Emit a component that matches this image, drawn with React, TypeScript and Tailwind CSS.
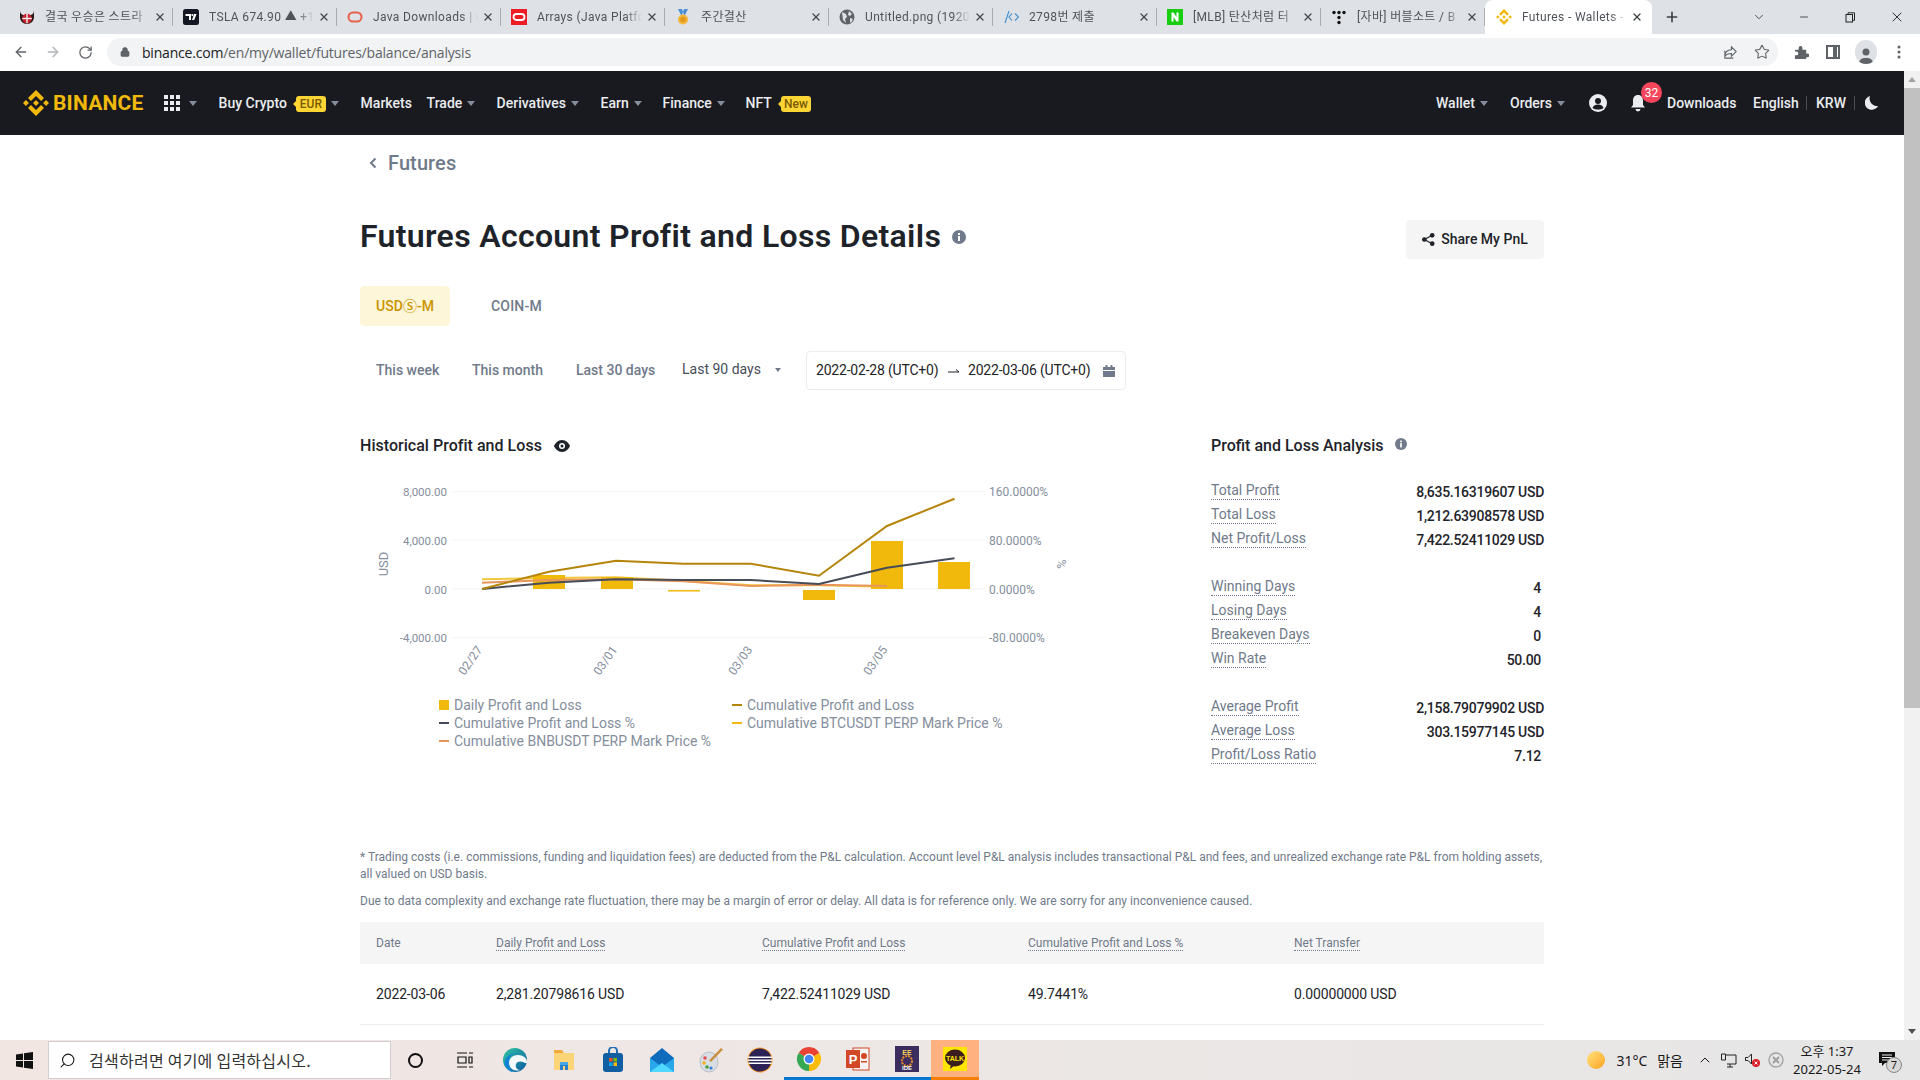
import React from "react";
import { ArrowLeft, ArrowRight, RotateCw, Lock, Star, Plus, ChevronDown, Minus, X, ChevronUp, Search } from "lucide-react";

const BN = "M38.73 53.2l24.59-24.58 24.6 24.6 14.3-14.31L63.32 0 24.42 38.9zM0 63.31l14.3-14.31 14.31 14.31-14.31 14.3zM38.73 73.41l24.59 24.59 24.6-24.6 14.31 14.29-38.9 38.91-38.91-38.88zM98 63.31l14.3-14.31 14.31 14.3-14.31 14.32zM77.83 63.3L63.32 48.78 52.59 59.51l-1.24 1.23-2.54 2.54 14.51 14.5 14.51-14.47z";

function BnLogo({ size }: { size: number }) {
  return (
    <svg width={size} height={size} viewBox="0 0 126.61 126.61" fill="#f0b90b"><path d={BN} /></svg>
  );
}

function Fav({ i }: { i: number }) {
  const s = { width: 16, height: 16, viewBox: "0 0 16 16" };
  switch (i) {
    case 0:
      return <svg {...s}><path d="M1 1c0 3 1 4 3 5h8c2-1 3-2 3-5v7c0 4-3 7-7 7s-7-3-7-7z" fill="#2a1a1a" /><circle cx="8" cy="9.500" r="4.800" fill="#c8202c" /><rect x="7.300" y="4.700" width="1.400" height="9.600" fill="#eee" /><rect x="3.200" y="8.800" width="9.600" height="1.400" fill="#eee" /></svg>;
    case 1:
      return <svg {...s}><rect width="16" height="16" rx="2.500" fill="#131722" /><path d="M2.500 5h5.500v6H6V7H2.500zM13.500 5h-2.500l-2 6h2.200z" fill="#fff" /><circle cx="9.300" cy="6" r="1" fill="#fff" /></svg>;
    case 2:
      return <svg {...s}><rect x="1.500" y="3.500" width="13" height="9" rx="4.500" fill="none" stroke="#e8604a" strokeWidth="2" /></svg>;
    case 3:
      return <svg {...s}><rect width="16" height="16" fill="#ee1c25" /><rect x="2.500" y="5" width="11" height="6" rx="3" fill="none" stroke="#fff" strokeWidth="1.800" /></svg>;
    case 4:
      return <svg {...s}><path d="M3 0h4l2 6H6zM13 0H9L7 6h3z" fill="#4a90d9" /><circle cx="8" cy="10.500" r="5" fill="#f4b63a" /><circle cx="8" cy="10.500" r="2.800" fill="#e29a1f" /></svg>;
    case 5:
      return <svg {...s}><circle cx="8" cy="8" r="7.500" fill="#5f6368" /><path d="M3 3l4 2 1 3-2 2 1 4-3-3zM10 2l3 3-2 2-2-1zM11 9l3 1-2 4-1-1z" fill="#dee1e6" /></svg>;
    case 6:
      return <svg {...s} fill="none" stroke="#3c8dd0" strokeWidth="1.100"><path d="M6 2L2 14M9 4.500L6 8l3 3.500M12 4.500L15.500 8 12 11.500" /></svg>;
    case 7:
      return <svg {...s}><rect width="16" height="19" y="-1.500" rx="1" fill="#19ce10" /><path d="M4.500 3.500h2L9.500 8V3.500h2v9h-2L6.500 8v4.500h-2z" fill="#fff" /></svg>;
    case 8:
      return <svg {...s} fill="#111"><circle cx="3" cy="3.500" r="1.700" /><circle cx="8" cy="3.500" r="1.700" /><circle cx="13" cy="3.500" r="1.700" /><circle cx="8" cy="8.500" r="1.700" /><circle cx="8" cy="13.500" r="1.700" /></svg>;
    default:
      return <BnLogo size={16} />;
  }
}

const tabs = ["결국 우승은 스트라", "TSLA 674.90 ▲ +1", "Java Downloads | O", "Arrays (Java Platfo", "주간결산", "Untitled.png (1920", "2798번 제출", "[MLB] 탄산처럼 터", "[자바] 버블소트 / B"];

function ChromeBar() {
  return (
    <div className="h-[34px] bg-[#dee1e6] flex items-stretch pl-[9px] shrink-0 text-[#3c4043]">
      {tabs.map((t, i) => (
        <div key={i} className="w-[164px] shrink-0 flex items-center relative pl-[10px] pr-[7px]">
          <Fav i={i} />
          <span className="ml-[10px] w-[105px] overflow-hidden whitespace-nowrap text-[12px] tracking-[0.35px] text-[#50545a] [mask-image:linear-gradient(90deg,#000_84%,transparent)]">{t}</span>
          <X size={12} strokeWidth={2.6} className="ml-auto text-[#45494e]" />
          <div className="absolute right-0 top-[8px] bottom-[8px] w-px bg-[#a9adb2]" />
        </div>
      ))}
      <div className="w-[167px] shrink-0 flex items-center bg-white rounded-t-[8px] pl-[11px] pr-[9px] text-[#3c4043]">
        <Fav i={9} />
        <span className="ml-[10px] w-[105px] overflow-hidden whitespace-nowrap text-[12px] tracking-[0.35px] text-[#50545a] [mask-image:linear-gradient(90deg,#000_84%,transparent)]">Futures - Wallets - B</span>
        <X size={12} strokeWidth={2.6} className="ml-auto" />
      </div>
      <div className="ml-[12px] flex items-center"><Plus size={16} strokeWidth={2.4} className="text-[#3c4043]" /></div>
      <div className="ml-auto flex items-center text-[#222]">
        <ChevronDown size={14} strokeWidth={1.3} className="mr-[32px]" />
        <Minus size={12} strokeWidth={1.5} className="mr-[35px]" />
        <svg width="11" height="11" viewBox="0 0 11 11" fill="none" stroke="#222" className="mr-[33px]"><rect x="1" y="2.500" width="6.500" height="7.500" /><path d="M3 2.500V.8h6.500v7.500H7.500" /></svg>
        <X size={16} strokeWidth={1.4} className="mr-[15px]" />
      </div>
    </div>
  );
}

function ToolBar() {
  return (
    <div className="h-[37px] bg-white flex items-center shrink-0 text-[#5f6368] pb-[1px]">
      <ArrowLeft size={16} strokeWidth={2} className="ml-[13px]" />
      <ArrowRight size={16} strokeWidth={2} className="ml-[16px] text-[#b0b3b8]" />
      <RotateCw size={15} strokeWidth={2} className="ml-[17px]" />
      <div className="ml-[14px] w-[1671px] h-[28px] rounded-full bg-[#f1f3f4] flex items-center pl-[13px] pr-[8px]">
        <Lock size={10} strokeWidth={3} fill="#5f6368" />
        <span className="ml-[12px] text-[14px] text-[#202124] font-['Open_Sans','Noto_Sans',sans-serif] tracking-[-0.2px]">binance.com<span className="text-[#5f6368]">/en/my/wallet/futures/balance/analysis</span></span>
        <div className="ml-auto flex items-center">
          <svg width="15" height="15" viewBox="0 0 16 16" fill="none" stroke="#5f6368" strokeWidth="1.200" className="mr-[16px]"><path d="M9 2v3C4 5 2 8 2 12c2-3 4-3 7-3v3l5-5zM11 14H2V6" /></svg>
          <Star size={16} strokeWidth={1.6} />
        </div>
      </div>
      <svg width="15" height="15" viewBox="0 0 16 16" fill="#5f6368" className="ml-[16px]"><path d="M1 5h4V3a2 2 0 014 0v2h4v4h1.500a2 2 0 010 4H13v2H1v-4h1.500a2 2 0 000-4H1z" /></svg>
      <svg width="14" height="14" viewBox="0 0 14 14" fill="none" stroke="#5f6368" strokeWidth="2" className="ml-[17px]"><rect x="1" y="1" width="12" height="12" /><path d="M9 1v12" strokeWidth="4" /></svg>
      <div className="ml-[15px] w-[22px] h-[24px] rounded-full bg-[#dee1e6] flex items-end justify-center overflow-hidden">
        <svg width="14" height="17" viewBox="0 0 14 17" fill="#5f6368"><circle cx="7" cy="5" r="3.500" /><path d="M0 17c0-5 3-6 7-6s7 1 7 6z" /></svg>
      </div>
      <svg width="4" height="14" viewBox="0 0 4 14" fill="#5f6368" className="ml-[20px]"><circle cx="2" cy="2" r="1.500" /><circle cx="2" cy="7" r="1.500" /><circle cx="2" cy="12" r="1.500" /></svg>
    </div>
  );
}

function Caret({ c = "#848e9c", className = "" }: { c?: string; className?: string }) {
  return <svg width="8" height="5" viewBox="0 0 8 5" className={className}><path d="M0 0h8L4 5z" fill={c} /></svg>;
}

function Badge({ children }: { children: React.ReactNode }) {
  return (
    <span className="relative inline-flex items-center justify-center h-[16px] w-[30px] bg-[#fcd535] rounded-[3px] text-[12px] text-[#7a5b00] leading-none">
      <span className="absolute -left-[3px] top-[5px] border-y-[3px] border-r-[3px] border-y-transparent border-r-[#fcd535]" />
      {children}
    </span>
  );
}

function NavItem({ w, label, caret = true }: { w: string; label: string; caret?: boolean }) {
  return (
    <div className={`${w} shrink-0 flex items-center`}>
      <span>{label}</span>
      {caret && <Caret className="ml-[5px]" />}
    </div>
  );
}

function Nav() {
  return (
    <div className="h-[64px] bg-[#181a20] flex items-center pl-[23px] text-[14px] font-medium text-[#eaecef] shrink-0">
      <div className="w-[141px] shrink-0 flex items-center">
        <BnLogo size={26} />
        <span className="ml-[4px] text-[#f0b90b] text-[21px] font-bold tracking-[0.2px] leading-none">BINANCE</span>
      </div>
      <div className="w-[54.600px] shrink-0 flex items-center">
        <svg width="16" height="16" viewBox="0 0 16 16" fill="#eaecef">
          {[0, 6, 12].flatMap((y) => [0, 6, 12].map((x) => <rect key={`${x}-${y}`} x={x} y={y} width="4" height="4" />))}
        </svg>
        <Caret className="ml-[9px]" />
      </div>
      <div className="w-[142px] shrink-0 flex items-center">
        <span>Buy Crypto</span>
        <span className="ml-[9px]"><Badge>EUR</Badge></span>
        <Caret className="ml-[5px]" />
      </div>
      <NavItem w="w-[66px]" label="Markets" caret={false} />
      <NavItem w="w-[70px]" label="Trade" />
      <NavItem w="w-[104px]" label="Derivatives" />
      <NavItem w="w-[62px]" label="Earn" />
      <NavItem w="w-[83px]" label="Finance" />
      <div className="flex items-center">
        <span>NFT</span>
        <span className="ml-[9px]"><Badge>New</Badge></span>
      </div>
      <div className="ml-auto flex items-center pr-[26px]">
        <NavItem w="w-[74px]" label="Wallet" />
        <NavItem w="w-[79px]" label="Orders" />
        <svg width="18" height="18" viewBox="0 0 18 18"><circle cx="9" cy="9" r="9" fill="#eaecef" /><circle cx="9" cy="7" r="3" fill="#181a20" /><path d="M3.500 14c1-3 3-3.500 5.500-3.500s4.500.5 5.500 3.500c-3 2-8 2-11 0z" fill="#181a20" /></svg>
        <div className="relative ml-[22px] mr-[20px] w-[18px] h-[18px]">
          <svg width="18" height="18" viewBox="0 0 18 18" fill="#eaecef"><path d="M9 1c3.500 0 5 2.500 5 5.500V11l2 2.500H2L4 11V6.500C4 3.500 5.500 1 9 1zM6.500 15h5a2.500 2.500 0 01-5 0z" /></svg>
          <span className="absolute -top-[12px] left-[12px] w-[21px] h-[21px] rounded-full bg-[#f6465d] text-white text-[12px] font-normal flex items-center justify-center">32</span>
        </div>
        <span className="w-[86px]">Downloads</span>
        <span className="w-[53px]">English</span>
        <span className="w-px h-[14px] bg-[#474d57] mr-[9px]" />
        <span className="w-[29px]">KRW</span>
        <span className="w-px h-[14px] bg-[#474d57] ml-[9px] mr-[10px]" />
        <svg width="13" height="14" viewBox="0 0 13 14" fill="#eaecef"><path d="M5 0a7 7 0 108 10A7.500 7.500 0 015 0z" /></svg>
      </div>
    </div>
  );
}

function Info({ size = 14 }: { size?: number }) {
  return (
    <svg width={size} height={size} viewBox="0 0 14 14"><circle cx="7" cy="7" r="7" fill="#707a8a" /><rect x="6" y="6" width="2" height="5" fill="#fff" /><rect x="6" y="3" width="2" height="2" fill="#fff" /></svg>
  );
}

const X_PTS = [482, 549, 616, 683.5, 751, 819, 887, 954.5];
const pts = (ys: number[]) => ys.map((y, i) => `${X_PTS[i]},${y}`).join(" ");

function Chart() {
  const grid = [
    [491.7, "8,000.00", "160.0000%"],
    [540, "4,000.00", "80.0000%"],
    [589, "0.00", "0.0000%"],
    [637.7, "-4,000.00", "-80.0000%"],
  ] as const;
  const bars = [[533, 575, 14], [601, 577, 12], [668, 590, 1.5], [803, 590, 10], [871, 541, 48], [938, 562, 27]];
  const fill = "#848e9c";
  return (
    <svg width="740" height="220" viewBox="360 470 740 220" className="block" fontFamily="Roboto, sans-serif" fontSize="12">
      {grid.map(([y, l, r]) => (
        <g key={y}>
          <line x1="453" x2="985" y1={y} y2={y} stroke="#f2f3f5" />
          <text x="447" y={y + 4.5} textAnchor="end" fill={fill} fontSize="11.500">{l}</text>
          <text x="989" y={y + 4.5} fill={fill}>{r}</text>
        </g>
      ))}
      <text transform="translate(388 564) rotate(-90)" textAnchor="middle" fill={fill} fontSize="13">USD</text>
      <text transform="translate(1057 564) rotate(90)" textAnchor="middle" fill={fill} fontSize="13">%</text>
      {bars.map(([x, y, h], i) => <rect key={i} x={x} y={y} width="32" height={h} fill="#f0b90b" />)}
      <polyline points={pts([579.3, 578, 577.3, 580.7, 585.3, 585.3, 586.7])} fill="none" stroke="#f0b90b" strokeWidth="2" opacity="0.8" />
      <polyline points={pts([582.7, 580, 579.3, 581.3, 586, 584.7, 586])} fill="none" stroke="#e8965a" strokeWidth="2" />
      <polyline points={pts([589, 582.7, 579.3, 580, 580, 584, 567.700, 558.300])} fill="none" stroke="#474d57" strokeWidth="2" />
      <polyline points={pts([589, 571.7, 560.700, 563.700, 563.700, 575.700, 526, 498.700])} fill="none" stroke="#b5850b" strokeWidth="2" />
      {[["02/27", 471], ["03/01", 606], ["03/03", 741], ["03/05", 876]].map(([t, x]) => (
        <text key={t} transform={`translate(${x} 661) rotate(-55)`} textAnchor="middle" dominantBaseline="middle" fill={fill}>{t}</text>
      ))}
    </svg>
  );
}

function LegendItem({ color, label, square }: { color: string; label: string; square?: boolean }) {
  return (
    <div className="flex items-center h-[18px]">
      <span className={`w-[10px] shrink-0 ${square ? "h-[10px]" : "h-[2px]"}`} style={{ background: color }} />
      <span className="ml-[5px] whitespace-nowrap">{label}</span>
    </div>
  );
}

function StatRow({ label, value, usd }: { label: string; value: string; usd?: boolean }) {
  return (
    <div className="h-[24px] flex items-center justify-between">
      <span className="mt-[1px] text-[#707a8a] leading-[17px] border-b border-dotted border-[#707a8a]">{label}</span>
      <span className={`mt-[4px] font-medium text-[#1e2329] tracking-[-0.28px] ${usd ? "" : "pr-[3px]"}`}>{value}</span>
    </div>
  );
}

function Analysis() {
  return (
    <div className="w-[333px] text-[14px]">
      <div className="h-[24px] flex items-center text-[16px] font-medium text-[#1e2329]">
        <span>Profit and Loss Analysis</span>
        <span className="ml-[11px] mb-[5px]"><Info size={12} /></span>
      </div>
      <div className="mt-[20px]">
        <StatRow label="Total Profit" value="8,635.16319607 USD" usd />
        <StatRow label="Total Loss" value="1,212.63908578 USD" usd />
        <StatRow label="Net Profit/Loss" value="7,422.52411029 USD" usd />
      </div>
      <div className="mt-[24px]">
        <StatRow label="Winning Days" value="4" />
        <StatRow label="Losing Days" value="4" />
        <StatRow label="Breakeven Days" value="0" />
        <StatRow label="Win Rate" value="50.00" />
      </div>
      <div className="mt-[24px]">
        <StatRow label="Average Profit" value="2,158.79079902 USD" usd />
        <StatRow label="Average Loss" value="303.15977145 USD" usd />
        <StatRow label="Profit/Loss Ratio" value="7.12" />
      </div>
    </div>
  );
}

const GRID = "grid grid-cols-[120px_266px_266px_266px_1fr] px-[16px] items-center";

function Content() {
  return (
    <div className="flex-1 overflow-hidden bg-white">
      <div className="w-[1184px] ml-[360px]">
        <div className="h-[56px] flex items-center pl-[9px] text-[20px] font-medium text-[#707a8a]">
          <svg width="8" height="12" viewBox="0 0 8 12" fill="none" stroke="#707a8a" strokeWidth="2"><path d="M6.500 1.500L2 6l4.500 4.500" /></svg>
          <span className="ml-[11px] tracking-[0.1px]">Futures</span>
        </div>
        <div className="mt-[29px] h-[39px] flex items-center justify-between">
          <div className="flex items-center">
            <h1 className="text-[32px] font-semibold text-[#1e2329] leading-none mb-[7px] tracking-[0.33px]">Futures Account Profit and Loss Details</h1>
            <span className="ml-[11px] mb-[6px]"><Info size={14} /></span>
          </div>
          <button className="w-[138px] h-[39px] bg-[#f5f5f5] rounded-[4px] flex items-center justify-center text-[14px] font-medium text-[#1e2329]">
            <svg width="13" height="13" viewBox="0 0 14 14" fill="#1e2329" className="mr-[6px]"><circle cx="11" cy="2.500" r="2.500" /><circle cx="11" cy="11.500" r="2.500" /><circle cx="2.500" cy="7" r="2.500" /><path d="M2.500 7L11 2.500M2.500 7L11 11.500" stroke="#1e2329" strokeWidth="1.300" /></svg>
            Share My PnL
          </button>
        </div>
        <div className="mt-[27px] h-[40px] flex items-center text-[14px] font-medium">
          <div className="w-[90px] h-[40px] rounded-[4px] bg-[#fef6d8] text-[#c99400] flex items-center justify-center">USDⓈ-M</div>
          <div className="ml-[41px] text-[#707a8a] tracking-[0.2px]">COIN-M</div>
        </div>
        <div className="mt-[25px] h-[39px] flex items-center text-[14px] text-[#707a8a] font-medium">
          <span className="w-[96px] pl-[16px]">This week</span>
          <span className="w-[104px] pl-[16px]">This month</span>
          <span className="w-[110px] pl-[16px]">Last 30 days</span>
          <span className="w-[136px] pl-[12px] flex items-center text-[#474d57] font-normal mb-[2px]">
            Last 90 days
            <svg width="6" height="4" viewBox="0 0 6 4" className="ml-[14px]"><path d="M0 0h6L3 4z" fill="#707a8a" /></svg>
          </span>
          <div className="w-[320px] h-[39px] border border-[#eaecef] rounded-[4px] flex items-center pl-[9px] pr-[10px] text-[#1e2329] font-normal tracking-[-0.2px]">
            <span className="w-[123px] whitespace-nowrap">2022-02-28 (UTC+0)</span>
            <svg width="12" height="6" viewBox="0 0 12 6" fill="none" stroke="#1e2329" className="ml-[9px]"><path d="M0 4h11L8 1.500" /></svg>
            <span className="ml-[8px] whitespace-nowrap">2022-03-06 (UTC+0)</span>
            <svg width="12" height="12" viewBox="0 0 12 12" fill="#707a8a" className="ml-auto"><rect y="2" width="12" height="3" /><rect y="6" width="12" height="6" /><rect x="2.500" width="2" height="2" /><rect x="7.500" width="2" height="2" /></svg>
          </div>
        </div>
        <div className="mt-[44px] h-[415px] flex justify-between">
          <div className="w-[851px]">
            <div className="h-[24px] flex items-center text-[16px] font-medium text-[#1e2329]">
              <span className="tracking-[0.03px]">Historical Profit and Loss</span>
              <svg width="16" height="12" viewBox="0 0 16 12" className="ml-[12px]"><path d="M8 0c4 0 7 3.500 8 6-1 2.500-4 6-8 6S1 8.500 0 6c1-2.500 4-6 8-6z" fill="#1e2329" /><circle cx="8" cy="6" r="3" fill="#fff" /><circle cx="8" cy="6" r="1.500" fill="#1e2329" /></svg>
            </div>
            <div className="mt-[12px]"><Chart /></div>
            <div className="mt-[6px] ml-[79px] grid grid-cols-[293px_1fr] text-[14px] text-[#848e9c] leading-[18px]">
              <LegendItem color="#f0b90b" label="Daily Profit and Loss" square />
              <LegendItem color="#b5850b" label="Cumulative Profit and Loss" />
              <LegendItem color="#474d57" label="Cumulative Profit and Loss %" />
              <LegendItem color="#f0b90b" label="Cumulative BTCUSDT PERP Mark Price %" />
              <LegendItem color="#e8965a" label="Cumulative BNBUSDT PERP Mark Price %" />
            </div>
          </div>
          <Analysis />
        </div>
        <p className="text-[12px] leading-[17px] text-[#707a8a]">* Trading costs (i.e. commissions, funding and liquidation fees) are deducted from the P&amp;L calculation. Account level P&amp;L analysis includes transactional P&amp;L and fees, and unrealized exchange rate P&amp;L from holding assets, all valued on USD basis.</p>
        <p className="mt-[10px] text-[12px] leading-[17px] text-[#707a8a] tracking-[0.04px]">Due to data complexity and exchange rate fluctuation, there may be a margin of error or delay. All data is for reference only. We are sorry for any inconvenience caused.</p>
        <div className={`mt-[12px] h-[42px] bg-[#f5f5f5] text-[12px] text-[#707a8a] ${GRID}`}>
          <span>Date</span>
          {["Daily Profit and Loss", "Cumulative Profit and Loss", "Cumulative Profit and Loss %", "Net Transfer"].map((h) => (
            <span key={h}><span className="border-b border-dotted border-[#707a8a]">{h}</span></span>
          ))}
        </div>
        <div className={`h-[61px] border-b border-[#eaecef] text-[14px] text-[#1e2329] tracking-[-0.15px] ${GRID}`}>
          <span>2022-03-06</span>
          <span>2,281.20798616 USD</span>
          <span>7,422.52411029 USD</span>
          <span>49.7441%</span>
          <span>0.00000000 USD</span>
        </div>
      </div>
    </div>
  );
}

function Scrollbar() {
  return (
    <div className="w-[16px] shrink-0 bg-[#f1f1f1] flex flex-col items-center">
      <div className="h-[17px] flex items-center"><svg width="8" height="5" viewBox="0 0 8 5"><path d="M0 5h8L4 0z" fill="#a3a3a3" /></svg></div>
      <div className="w-full h-[620px] bg-[#c1c1c1]" />
      <div className="mt-auto h-[17px] flex items-center"><svg width="8" height="5" viewBox="0 0 8 5"><path d="M0 0h8L4 5z" fill="#505050" /></svg></div>
    </div>
  );
}

function TbIcon({ i }: { i: number }) {
  const s = { width: 26, height: 26, viewBox: "0 0 26 26" };
  switch (i) {
    case 0:
      return <svg {...s}><defs><linearGradient id="eg" x1="0" y1="0" x2="1" y2="1"><stop offset="0" stopColor="#30c5a0" /><stop offset="1" stopColor="#0c59a4" /></linearGradient></defs><circle cx="13" cy="13" r="12" fill="url(#eg)" /><path d="M25 15c0-4-4-7-9-7-6 0-9 4-9 8 0 5 5 9 11 7-3 0-5-3-4-6s5-3 7-2 4 2 4 0z" fill="#fff" opacity="0.95" /><path d="M7 16c-1-6 4-11 10-10-5-1-12 2-14 8-1 5 3 10 8 11-3-2-4-5-4-9z" fill="#1283d8" /></svg>;
    case 1:
      return <svg {...s}><path d="M3 3h8l2 3h0v2H3z" fill="#f2a93b" /><rect x="3" y="6" width="20" height="17" fill="#fcd478" /><path d="M9 23v-7a1 1 0 011-1h6a1 1 0 011 1v7h-3v-4h-2v4z" fill="#2a7fd0" /><rect x="9" y="15" width="8" height="3" fill="#48a5e8" /></svg>;
    case 2:
      return <svg {...s}><path d="M9 7V4a4 4 0 018 0v3" fill="none" stroke="#1e6fb8" strokeWidth="2" /><rect x="3" y="6" width="20" height="19" rx="3" fill="#115ea3" /><rect x="9" y="11" width="3.500" height="3.500" fill="#f25022" /><rect x="13.500" y="11" width="3.500" height="3.500" fill="#7fba00" /><rect x="9" y="15.500" width="3.500" height="3.500" fill="#00a4ef" /><rect x="13.500" y="15.500" width="3.500" height="3.500" fill="#ffb900" /></svg>;
    case 3:
      return <svg {...s}><path d="M1 11L13 1l12 10v14H1z" fill="#0f6cbd" /><path d="M1 11l12 9 12-9v14H1z" fill="#28a8ea" /><path d="M1 25l12-9 12 9z" fill="#50d9ff" /></svg>;
    case 4:
      return <svg {...s}><ellipse cx="11" cy="15" rx="9" ry="10" fill="#d9dde4" stroke="#9aa3b0" strokeWidth="0.600" /><circle cx="7" cy="11" r="1.800" fill="#e25050" /><circle cx="6" cy="16" r="1.800" fill="#f0b020" /><circle cx="9" cy="20" r="1.800" fill="#48a040" /><circle cx="13" cy="21" r="1.600" fill="#3080d0" /><path d="M23 1l2 1.500L13 15l-2-1.500z" fill="#c89040" /></svg>;
    case 5:
      return <svg {...s}><circle cx="13" cy="13" r="12.500" fill="#f7941e" /><circle cx="13" cy="13" r="11.500" fill="#2c2255" /><rect x="1" y="9.500" width="24" height="1.500" fill="#fff" /><rect x="1" y="12.500" width="24" height="1.500" fill="#fff" /><rect x="1.500" y="15.500" width="23" height="1.500" fill="#fff" /></svg>;
    case 6:
      return <svg {...s}><path d="M13 13L2.600 7A12 12 0 0123.400 7z" fill="#ea4335" /><path d="M13 13L23.400 7A12 12 0 0113 25z" fill="#fbbc05" /><path d="M13 13L13 25A12 12 0 012.600 7z" fill="#34a853" /><circle cx="13" cy="13" r="5.500" fill="#fff" /><circle cx="13" cy="13" r="4.300" fill="#4285f4" /></svg>;
    case 7:
      return <svg {...s}><rect x="8" y="2" width="16" height="22" fill="#f4f4f4" stroke="#d24726" /><rect x="1" y="4" width="14" height="18" fill="#d24726" /><text x="8" y="18" textAnchor="middle" fill="#fff" fontFamily="Liberation Sans, sans-serif" fontWeight="700" fontSize="13">P</text><circle cx="19" cy="10" r="3" fill="#d24726" /><rect x="16" y="15" width="6" height="1.500" fill="#d24726" /></svg>;
    case 8:
      return <svg {...s}><rect x="1" y="0" width="24" height="26" fill="#3b2d5e" /><text x="13" y="9" textAnchor="middle" fill="#f4d35e" fontFamily="Liberation Sans, sans-serif" fontWeight="700" fontSize="7">EE</text><circle cx="13" cy="15" r="5" fill="none" stroke="#e28a2a" strokeWidth="2" strokeDasharray="2 1" /><text x="13" y="24" textAnchor="middle" fill="#fff" fontFamily="Liberation Sans, sans-serif" fontWeight="700" fontSize="6">IDE</text></svg>;
    default:
      return <svg {...s}><rect x="1" y="1" width="24" height="24" fill="#ffe600" /><ellipse cx="13" cy="12" rx="10" ry="8.500" fill="#3a1d1d" /><path d="M9 18l-1 5 5-4z" fill="#3a1d1d" /><text x="13" y="15" textAnchor="middle" fill="#ffe600" fontFamily="Liberation Sans, sans-serif" fontWeight="700" fontSize="7">TALK</text></svg>;
  }
}

function Taskbar() {
  const icons = [
    ["w-[49px]", ""], ["w-[49px]", ""], ["w-[49px]", ""], ["w-[49px]", ""], ["w-[49px]", ""], ["w-[49px]", ""],
    ["w-[49px]", "border-b-[3px] border-[#0078d4]"], ["w-[49px]", "border-b-[3px] border-[#0078d4]"], ["w-[49px]", "border-b-[3px] border-[#0078d4]"], ["w-[48px]", "bg-[#ffb27f] border-b-[3px] border-[#f77f00]"],
  ];
  return (
    <div className="h-[40px] shrink-0 flex items-stretch bg-gradient-to-r from-[#f2e6e3] via-[#ece7e5] to-[#e6e6e6] text-[#1a1a1a] font-['Noto_Sans','Noto_Sans_CJK_KR',sans-serif]">
      <div className="w-[48px] flex items-center justify-center">
        <svg width="17" height="17" viewBox="0 0 17 17" fill="#111"><path d="M0 2.500l7-1v6.500H0zM8 1.300L17 0v8H8zM0 9h7v6.500l-7-1zM8 9h9v8l-9-1.300z" /></svg>
      </div>
      <div className="w-[343px] my-[1px] bg-white border border-[#cfcfcf] flex items-center pl-[10px]">
        <Search size={17} strokeWidth={1.5} className="-scale-x-100" />
        <span className="ml-[13px] text-[16px] tracking-[0.25px] font-['Noto_Sans_CJK_KR',sans-serif] text-[#333] whitespace-nowrap">검색하려면 여기에 입력하십시오.</span>
      </div>
      <div className="w-[49px] flex items-center justify-center"><span className="w-[15px] h-[15px] rounded-full border-2 border-[#111]" /></div>
      <div className="w-[49px] flex items-center justify-center">
        <svg width="16" height="16" viewBox="0 0 16 16" fill="none" stroke="#111" strokeWidth="1.200"><path d="M0 1h10M0 15h10M1 5h8v6H1zM12 1h4M12 15h4M12 5h3v6h-3z" /></svg>
      </div>
      {icons.map(([w, c], i) => (
        <div key={i} className={`${w} flex items-center justify-center ${i === 0 ? "ml-[1px]" : ""} ${c}`}><TbIcon i={i} /></div>
      ))}
      <div className="ml-auto flex items-center text-[14px]">
        <span className="w-[18px] h-[18px] rounded-full bg-gradient-to-br from-[#ffe27a] to-[#fca311]" />
        <span className="ml-[11px]">31°C</span>
        <span className="ml-[10px] font-['Noto_Sans_CJK_KR',sans-serif]">맑음</span>
        <ChevronUp size={16} strokeWidth={1.5} className="ml-[14px]" />
        <svg width="16" height="15" viewBox="0 0 16 15" fill="none" stroke="#222" className="ml-[8px]"><path d="M4 2h11v9H6M0.500 1h4v6h-4zM9 11v3M6 14h6" /></svg>
        <svg width="16" height="14" viewBox="0 0 16 14" className="ml-[8px]"><path d="M0.500 4.500H3L6.500 1v10L3 7.500H0.500z" fill="none" stroke="#222" /><circle cx="11" cy="10" r="4" fill="#d9202c" /><path d="M9.500 8.500l3 3M12.500 8.500l-3 3" stroke="#fff" /></svg>
        <svg width="16" height="16" viewBox="0 0 16 16" fill="none" stroke="#a0a0a0" strokeWidth="1.300" className="ml-[7px]"><circle cx="8" cy="8" r="7" /><path d="M5 5l6 6M11 5l-6 6" strokeWidth="2" /></svg>
        <div className="ml-[6px] w-[74px] flex flex-col items-center text-[13px] leading-[18px] font-['Noto_Sans','Noto_Sans_CJK_KR',sans-serif]">
          <span>오후 1:37</span>
          <span>2022-05-24</span>
        </div>
        <div className="relative ml-[15px] mr-[25px] w-[16px] h-[16px]">
          <svg width="16" height="15" viewBox="0 0 16 15"><path d="M0 0h16v11H6l-3 3v-3H0z" fill="#111" /><path d="M3 3h10M3 5.500h10M3 8h7" stroke="#eee" /></svg>
          <span className="absolute top-[5px] left-[7px] w-[16px] h-[16px] rounded-full bg-[#d8d8d8] border border-[#888] text-[11px] flex items-center justify-center">7</span>
        </div>
      </div>
    </div>
  );
}

export default function App() {
  return (
    <div className="w-[1920px] h-[1080px] overflow-hidden flex flex-col bg-white font-['Roboto','Noto_Sans_CJK_KR',sans-serif]">
      <ChromeBar />
      <ToolBar />
      <div className="flex-1 min-h-0 flex">
        <div className="w-[1904px] flex flex-col min-h-0">
          <Nav />
          <Content />
        </div>
        <Scrollbar />
      </div>
      <Taskbar />
    </div>
  );
}
